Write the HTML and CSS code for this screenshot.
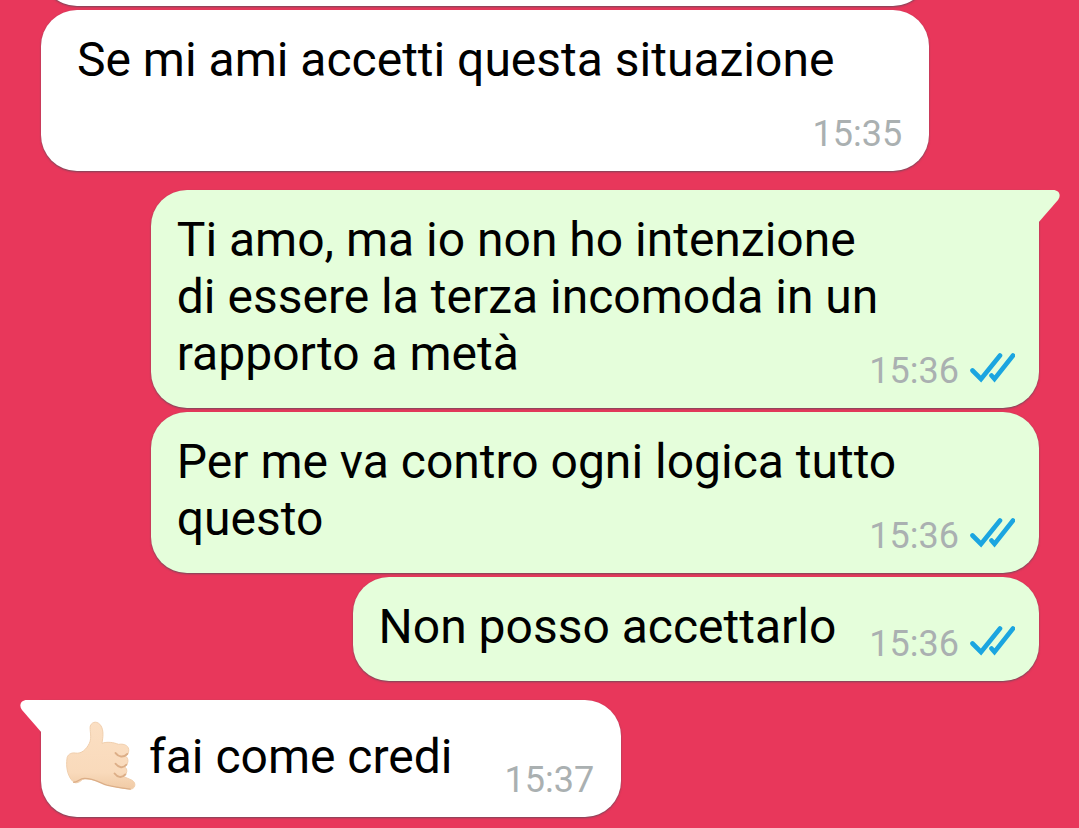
FILE: index.html
```
<!DOCTYPE html>
<html lang="it">
<head>
<meta charset="utf-8">
<meta name="viewport" content="width=device-width, initial-scale=1">
<title>Chat</title>
<link rel="stylesheet" href="styles.css">
</head>
<body>
<svg class="defs" aria-hidden="true">
  <symbol id="ticks" viewBox="0 0 46 34">
    <path d="M3.500 18.500L12 27L31 3.500M22.500 23.500L25.500 27L44 3.500" fill="none" stroke="currentColor" stroke-width="4.600" stroke-linecap="round" stroke-linejoin="miter"/>
  </symbol>
  <symbol id="tail" viewBox="0 0 22 34">
    <path d="M0 0H15C21 0 23.500 5 20 10L0 33Z" fill="currentColor"/>
  </symbol>
</svg>
<main class="chat">
  <article class="bubble received wide previous" aria-hidden="true"></article>
  <article class="bubble received wide indented">
    <p class="text spacious">Se mi ami accetti questa situazione</p>
    <div class="meta"><time>15:35</time></div>
  </article>
  <article class="bubble sent wide first">
    <svg class="tail" aria-hidden="true"><use href="#tail"/></svg>
    <p class="text">Ti amo, ma io non ho intenzione<br>di essere la terza incomoda in un<br>rapporto a metà</p>
    <div class="meta"><time>15:36</time><svg class="ticks" role="img" aria-label="Letto"><use href="#ticks"/></svg></div>
  </article>
  <article class="bubble sent wide">
    <p class="text">Per me va contro ogni logica tutto<br>questo</p>
    <div class="meta"><time>15:36</time><svg class="ticks" role="img" aria-label="Letto"><use href="#ticks"/></svg></div>
  </article>
  <article class="bubble sent short">
    <p class="text">Non posso accettarlo</p>
    <div class="meta"><time>15:36</time><svg class="ticks" role="img" aria-label="Letto"><use href="#ticks"/></svg></div>
  </article>
  <article class="bubble received short first reply">
    <svg class="tail" aria-hidden="true"><use href="#tail"/></svg>
    <p class="text with-emoji">
      <svg class="emoji" viewBox="0 0 72 72" role="img" aria-label="Mano che fa il gesto di chiamare">
        <defs>
          <linearGradient id="skin" x1="0" y1="0" x2="0" y2="1">
            <stop offset="0" stop-color="#fbdfc3"/>
            <stop offset="0.750" stop-color="#f9dabb"/>
            <stop offset="1" stop-color="#f0caa5"/>
          </linearGradient>
        </defs>
        <path d="M1 39C1 35 5 32 10 33C16 34 21 29 24 23C27 17 24 9 25 5C27 0 33 0 36 5C39 10 38 17 37 23C42 21 49 22 54 24C61 23 65 26 64.500 31C64 34 63 35 61 36C65 38 64.500 45 60 47C64 49 63 55 59 57L68 61C73 64 71 71 65 70C55 69 42 66 33 62C27 60 21 59 17 60C13 64 9 65 6 61C1 55 0 46 1 39Z" fill="url(#skin)" stroke="#f0cdab" stroke-width="1"/>
        <path d="M51 33C54 37 59 38 63 34M51 44C54 48 59 49 62 45M50 54C53 58 57 59 61 55" fill="none" stroke="#dcae87" stroke-width="2" stroke-linecap="round"/>
        <path d="M8 63C12 63 14 59 19 59C28 59 34 63 42 66C50 68 58 69 66 70" fill="none" stroke="#dcae87" stroke-width="1.400" stroke-linecap="round"/>
      </svg>
      <span>fai come credi</span>
    </p>
    <div class="meta"><time>15:37</time></div>
  </article>
</main>
</body>
</html>
```
FILE: styles.css
```
* {
  box-sizing: border-box;
}

body {
  margin: 0;
  background: #e8375b;
  color: #000;
  font-family: Roboto, "Liberation Sans", sans-serif;
}

.defs {
  position: absolute;
  width: 0;
  height: 0;
}

.chat {
  display: flex;
  flex-direction: column;
  gap: 4px;
  min-height: 100vh;
  padding: 0 40px 10px 41px;
  overflow: hidden;
}

.bubble {
  position: relative;
  display: grid;
  padding: 21px 24px 16px 26px;
  border-radius: 36px;
  box-shadow: 0 1px 2px rgba(70, 80, 90, 0.7);
}

.received {
  align-self: flex-start;
  padding-right: 27px;
  padding-left: 24px;
  background: #fff;
}

.sent {
  align-self: flex-end;
  background: #e5fedb;
}

.wide {
  width: 89%;
}

.wide > .text,
.wide > .meta {
  grid-area: 1 / 1;
}

.short {
  display: flex;
  gap: 33px;
}

.first {
  margin-top: 15px;
}

.sent.first {
  border-top-right-radius: 0;
}

.received.first {
  border-top-left-radius: 0;
}

.previous {
  height: 100px;
  margin-top: -94px;
}

.indented {
  padding-left: 36px;
}

.reply {
  gap: 52px;
}

.text {
  margin: 0;
  padding-bottom: 10px;
  font-size: 48px;
  line-height: 57px;
}

.spacious {
  padding-bottom: 67px;
}

.with-emoji {
  display: flex;
  align-items: center;
  gap: 12px;
}

.emoji {
  width: 72px;
  height: 70px;
}

.meta {
  display: flex;
  align-items: center;
  align-self: end;
  justify-self: end;
  gap: 10px;
  color: #aab0b1;
  font-size: 36px;
  line-height: 42px;
}

.ticks {
  width: 46px;
  height: 34px;
  margin-bottom: 4px;
  color: #1ba5e0;
}

.tail {
  position: absolute;
  top: 0;
  left: 100%;
  width: 22px;
  height: 34px;
  margin-left: -1px;
  color: #e5fedb;
}

.received .tail {
  right: 100%;
  left: auto;
  margin: 0 -1px 0 0;
  color: #fff;
  transform: scaleX(-1);
}
```
